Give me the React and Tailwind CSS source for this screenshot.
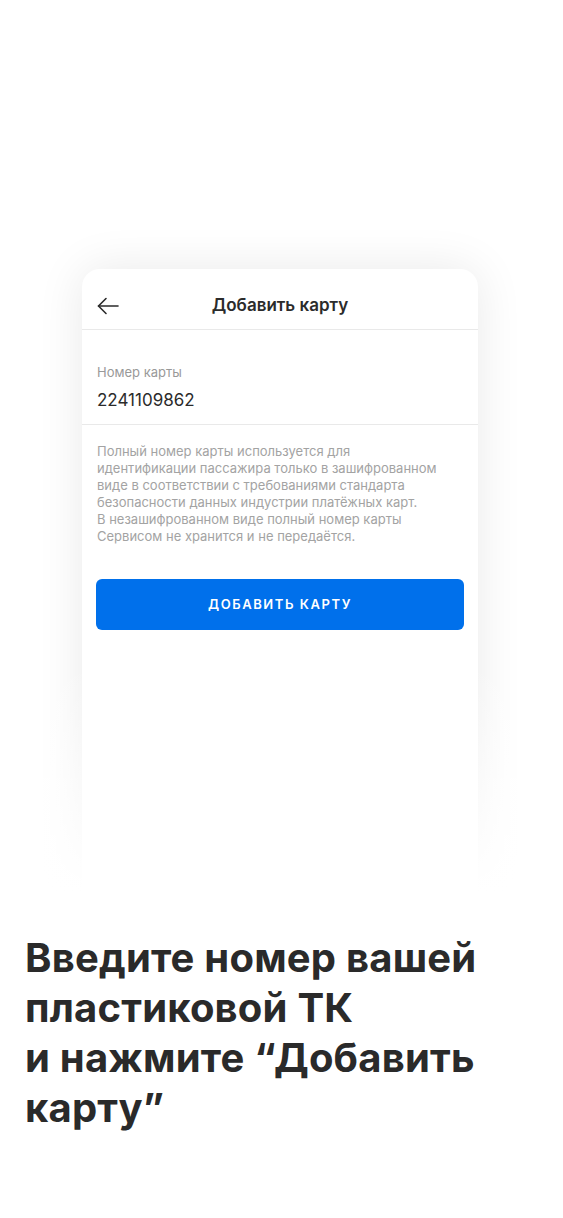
import React from 'react';

const FONT = { fontFamily: 'Inter, Roboto, "Noto Sans", sans-serif' };

function BackArrow() {
  return (
    <svg width="22" height="18" viewBox="0 0 22 18" fill="none" stroke="#2b2b2b" strokeWidth="1.6" strokeLinecap="round" strokeLinejoin="round">
      <path d="M1.5 9H21" />
      <path d="M9 1.5L1.5 9L9 16.5" />
    </svg>
  );
}

export default function App() {
  return (
    <div className="w-[563px] h-[1218px] bg-white overflow-hidden" style={FONT}>
      <div className="h-[269px]" />

      {/* phone screen */}
      <div className="relative ml-[82px] w-[396px] h-[624px]">
        <div className="h-full bg-white rounded-t-[18px] shadow-[0_0_48px_rgba(0,0,0,0.09)] overflow-hidden">
          <div className="h-[61px] pt-[14px] flex items-center px-[15px] border-b border-[#e9e9e9]">
            <BackArrow />
            <div className="flex-1 text-center text-[17px] font-semibold text-[#2b2b2b] pr-[22px]">Добавить карту</div>
          </div>

          <div className="px-[15px] pt-[34px] pb-[14px] border-b border-[#e9e9e9]">
            <div className="text-[13px] leading-[16px] text-[#999999]">Номер карты</div>
            <div className="mt-[10px] text-[17px] leading-[20px] text-[#2b2b2b]">2241109862</div>
          </div>

          <div className="px-[15px] pt-[18px]">
            <p className="text-[13px] leading-[17px] text-[#a3a3a3]">
              Полный номер карты используется для
              <br />
              идентификации пассажира только в зашифрованном
              <br />
              виде в соответствии с требованиями стандарта
              <br />
              безопасности данных индустрии платёжных карт.
              <br />
              В незашифрованном виде полный номер карты
              <br />
              Сервисом не хранится и не передаётся.
            </p>
          </div>

          <div className="px-[14px] pt-[34px]">
            <button className="w-full h-[51px] rounded-[6px] bg-[#0070eb] text-white text-[13px] font-semibold tracking-[0.12em]">
              ДОБАВИТЬ КАРТУ
            </button>
          </div>
        </div>
        <div className="absolute left-[-70px] right-[-70px] bottom-[-40px] h-[270px] bg-gradient-to-b from-white/0 to-white to-85%" />
      </div>

      <h1 className="mt-[40px] px-[25px] text-[40px] leading-[50px] font-bold text-[#2a2a2a] tracking-[0.005em]">
        Введите номер вашей
        <br />
        пластиковой ТК
        <br />
        и нажмите “Добавить
        <br />
        карту”
      </h1>
    </div>
  );
}
